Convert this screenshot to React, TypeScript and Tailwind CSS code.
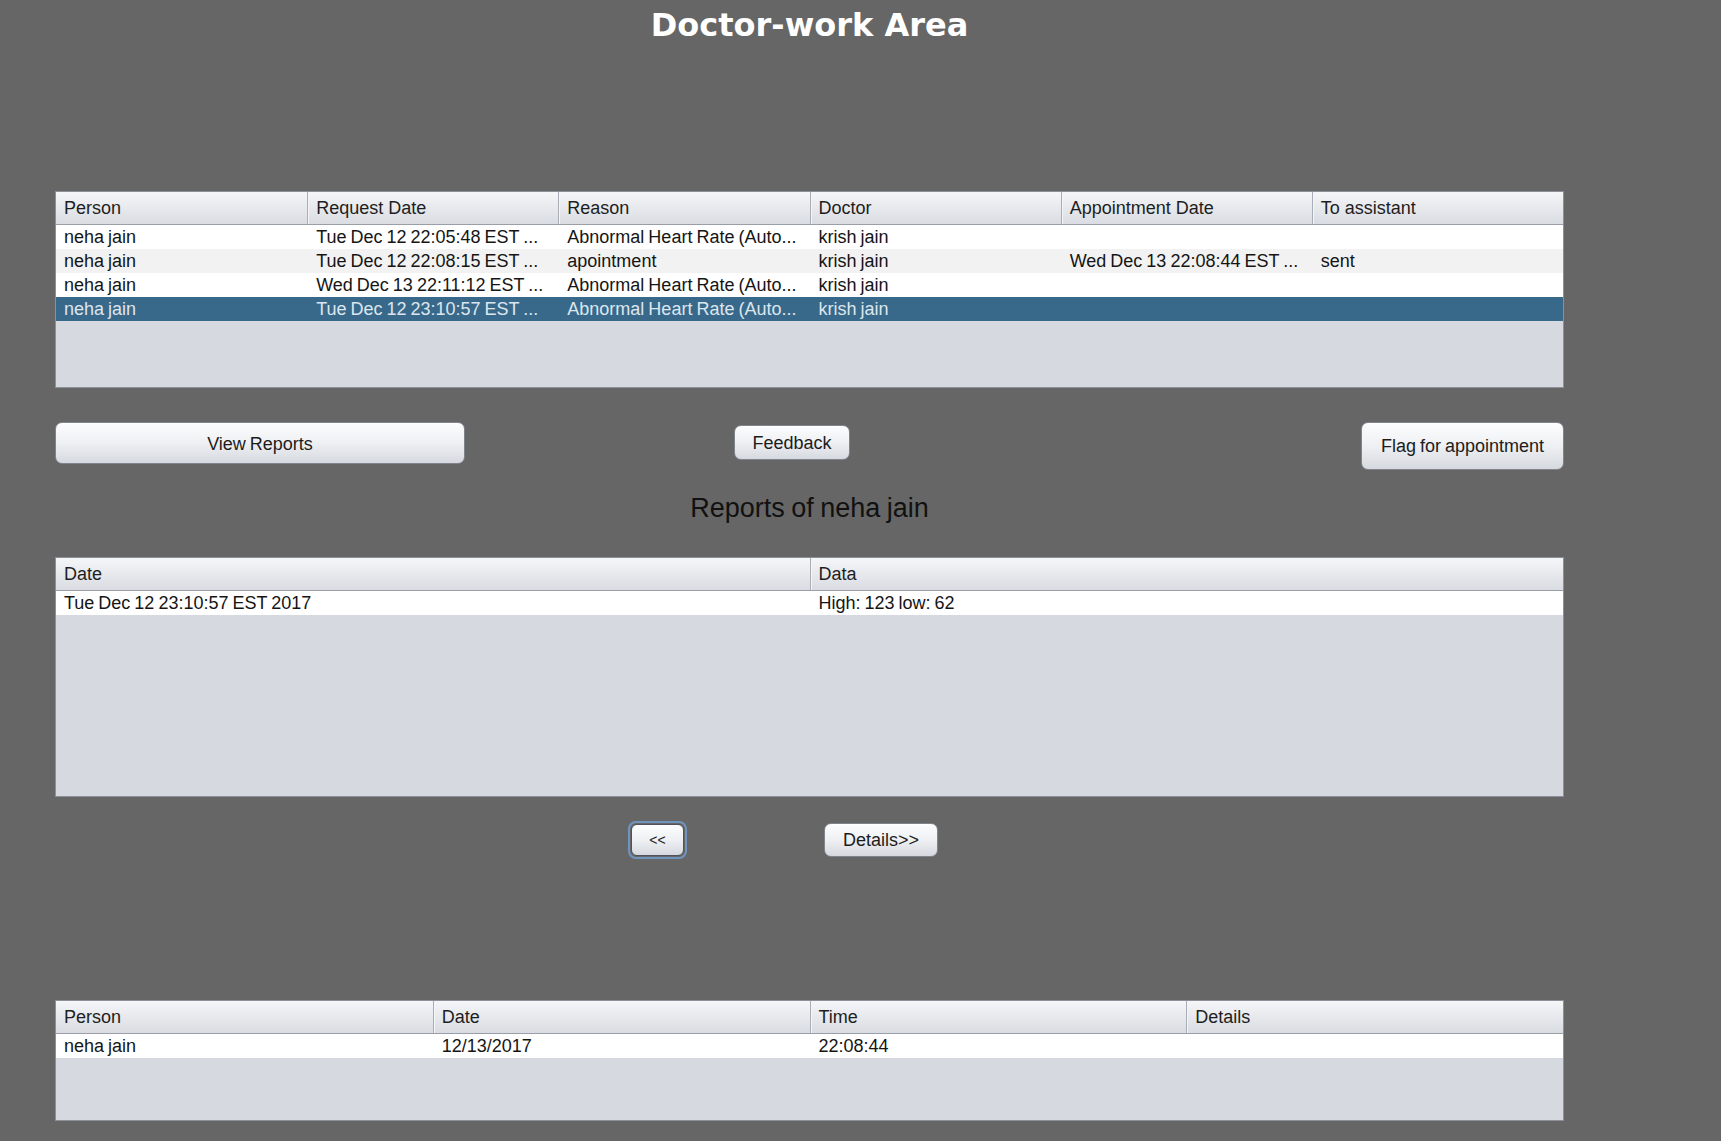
import React from 'react'

type Col = string

const Table = ({ columns, rows, height, selected }: { columns: Col[], rows: string[][], height: number, selected?: number }) => {
    const gridCls = columns.length === 6 ? 'grid-cols-6' : columns.length === 4 ? 'grid-cols-4' : 'grid-cols-2'
    return (
        <div className="border border-[#8c9099] bg-[#d6d9df] overflow-hidden" style={{ height }}>
            <div className={`grid ${gridCls} h-[33px] border-b border-[#9a9ea7] bg-gradient-to-b from-[#f5f6f8] via-[#e7e9ed] to-[#d9dce2]`}>
                {columns.map((c, i) => (
                    <div key={i} className={`flex items-center pl-[8px] pt-[1px] text-[18px] text-[#1e1e1e] whitespace-nowrap ${i > 0 ? 'border-l border-[#a9adb5] shadow-[inset_1px_0_0_#f4f5f7]' : ''}`}>
                        {c}
                    </div>
                ))}
            </div>
            {rows.map((r, ri) => {
                const isSel = ri === selected
                const bg = isSel ? 'bg-[#39698a] text-[#dde6ee]' : ri % 2 === 0 ? 'bg-white text-[#151515]' : 'bg-[#f2f2f2] text-[#151515]'
                return (
                    <div key={ri} className={`grid ${gridCls} h-[24px] ${bg}`}>
                        {r.map((cell, ci) => (
                            <div key={ci} className={`flex items-center pt-[1px] text-[18px] whitespace-nowrap overflow-hidden [word-spacing:-1px] ${ci > 0 ? 'pl-[9px]' : 'pl-[8px]'}`}>
                                {cell}
                            </div>
                        ))}
                    </div>
                )
            })}
        </div>
    )
}

const NimbusButton = ({ label, className }: { label: string, className?: string }) => (
    <button className={`flex items-center justify-center rounded-[7px] border border-[#80848d] bg-gradient-to-b from-[#fdfdfe] via-[#eef0f3] to-[#d6d9df] text-[18px] text-[#1c1c1c] [word-spacing:-1px] shadow-[inset_0_1px_0_#ffffff] ${className ?? ''}`}>
        {label}
    </button>
)

export default function App() {
    return (
        <div className="w-[1721px] h-[1141px] bg-[#666666] overflow-hidden font-['Liberation_Sans',Arial,sans-serif]">
            <div className="ml-[55px] w-[1509px]">
                <div className="h-[42px] pt-[7px] text-center text-[32px] leading-[36px] font-bold text-white font-['DejaVu_Sans',sans-serif]">
                    Doctor-work Area
                </div>

                <div className="mt-[149px]">
                    <Table
                        height={197}
                        selected={3}
                        columns={['Person', 'Request Date', 'Reason', 'Doctor', 'Appointment Date', 'To assistant']}
                        rows={[
                            ['neha jain', 'Tue Dec 12 22:05:48 EST ...', 'Abnormal Heart Rate (Auto...', 'krish jain', '', ''],
                            ['neha jain', 'Tue Dec 12 22:08:15 EST ...', 'apointment', 'krish jain', 'Wed Dec 13 22:08:44 EST ...', 'sent'],
                            ['neha jain', 'Wed Dec 13 22:11:12 EST ...', 'Abnormal Heart Rate (Auto...', 'krish jain', '', ''],
                            ['neha jain', 'Tue Dec 12 23:10:57 EST ...', 'Abnormal Heart Rate (Auto...', 'krish jain', '', ''],
                        ]}
                    />
                </div>

                <div className="mt-[34px] h-[48px] flex items-start">
                    <NimbusButton label="View Reports" className="w-[410px] h-[42px] pt-[2px]" />
                    <NimbusButton label="Feedback" className="ml-[269px] mt-[3px] w-[116px] h-[35px] pt-[2px]" />
                    <NimbusButton label="Flag for appointment" className="ml-auto w-[203px] h-[48px]" />
                </div>

                <div className="h-[87px] pt-[22px] text-center text-[27px] leading-[32px] text-[#111111] [word-spacing:-1px]">
                    Reports of neha jain
                </div>

                <Table
                    height={240}
                    columns={['Date', 'Data']}
                    rows={[['Tue Dec 12 23:10:57 EST 2017', 'High: 123 low: 62']]}
                />

                <div className="mt-[24px] h-[38px] flex items-start">
                    <div className="ml-[573px] w-[59px] h-[38px] rounded-[8px] border-2 border-[#6f95bf] p-[1px]">
                        <button className="w-full h-full flex items-center justify-center rounded-[6px] border border-[#4f535b] bg-gradient-to-b from-[#fdfdfe] via-[#eef0f3] to-[#d6d9df] text-[14px] text-[#1c1c1c]">
                            &lt;&lt;
                        </button>
                    </div>
                    <NimbusButton label="Details>>" className="ml-[137px] mt-[2px] w-[114px] h-[34px]" />
                </div>

                <div className="mt-[141px]">
                    <Table
                        height={121}
                        columns={['Person', 'Date', 'Time', 'Details']}
                        rows={[['neha jain', '12/13/2017', '22:08:44', '']]}
                    />
                </div>
            </div>
        </div>
    )
}
